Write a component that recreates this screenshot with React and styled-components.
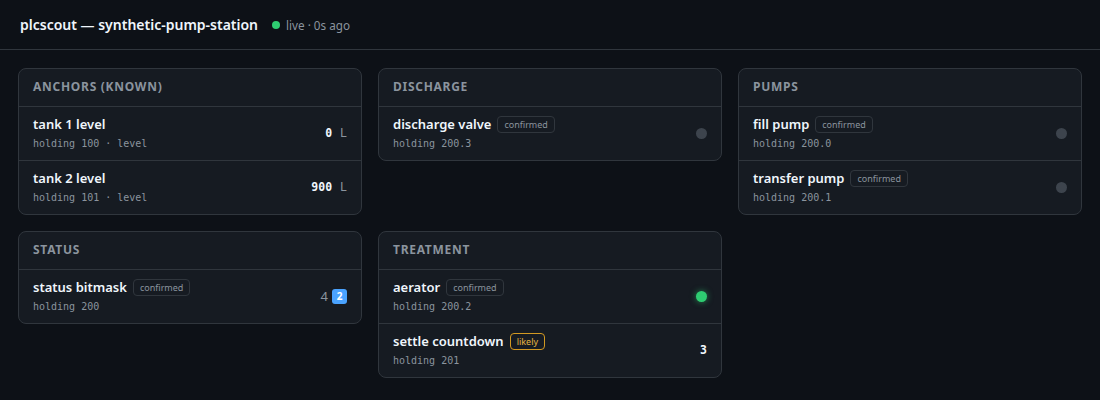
import React from "react";
import styled, { createGlobalStyle, css } from "styled-components";

const Global = createGlobalStyle`
  html, body { margin: 0; padding: 0; background: #0d1117; }
  body {
    font-family: "Segoe UI", "Noto Sans", "Open Sans", sans-serif;
    color: #e6edf3;
  }
  * { box-sizing: border-box; }
`;

const Page = styled.div`
  min-height: 400px;
  background: #0d1117;
`;

const Header = styled.header`
  height: 50px;
  display: flex;
  align-items: center;
  gap: 14px;
  padding: 0 20px;
  border-bottom: 1px solid #30363d;
`;

const Title = styled.h1`
  margin: 0;
  font-size: 14px;
  font-weight: 600;
  color: #f0f6fc;
`;

const Live = styled.span`
  display: flex;
  align-items: center;
  gap: 6px;
  font-size: 11.7px;
  color: #8b949e;
`;

const LiveDot = styled.span`
  width: 8px;
  height: 8px;
  border-radius: 50%;
  background: #2ecc71;
`;

const Grid = styled.main`
  display: grid;
  grid-template-columns: repeat(3, 1fr);
  gap: 16px;
  padding: 18px;
  align-items: start;
`;

const Card = styled.section`
  background: #161b22;
  border: 1px solid #30363d;
  border-radius: 8px;
  overflow: hidden;
`;

const CardHead = styled.h2`
  margin: 0;
  padding: 10px 14px 11px;
  font-size: 12px;
  font-weight: 700;
  letter-spacing: 0.06em;
  text-transform: uppercase;
  color: #8b949e;
  border-bottom: 1px solid #30363d;
  line-height: 16px;
`;

const Row = styled.div`
  display: flex;
  align-items: center;
  justify-content: space-between;
  padding: 8px 14px 9px;
  & + & { border-top: 1px solid #30363d; }
`;

const Info = styled.div`
  display: flex;
  flex-direction: column;
  gap: 4px;
`;

const NameLine = styled.div`
  display: flex;
  align-items: center;
  gap: 6px;
  height: 18px;
`;

const Name = styled.span`
  font-size: 13px;
  font-weight: 600;
  color: #f0f6fc;
  line-height: 18px;
`;

const Badge = styled.span`
  font-size: 9px;
  line-height: 13px;
  padding: 1px 6px;
  border-radius: 4px;
  border: 1px solid ${(p) => (p.$tone === "likely" ? "#d29922" : "#30363d")};
  color: ${(p) => (p.$tone === "likely" ? "#e3b341" : "#8b949e")};
`;

const Sub = styled.span`
  font-family: "DejaVu Sans Mono", "Liberation Mono", monospace;
  font-size: 10px;
  color: #8b949e;
  line-height: 14px;
`;

const Value = styled.span`
  display: flex;
  align-items: center;
  gap: 4px;
  font-family: "DejaVu Sans Mono", "Liberation Mono", monospace;
  font-size: 11.5px;
  font-weight: 700;
  color: #f0f6fc;
`;

const Unit = styled.span`
  font-weight: 400;
  color: #8b949e;
  margin-left: 4px;
`;

const Muted = styled.span`
  font-family: "Segoe UI", "Noto Sans", sans-serif;
  font-weight: 400;
  font-size: 13px;
  color: #8b949e;
`;

const Bit = styled.span`
  display: inline-flex;
  align-items: center;
  justify-content: center;
  width: 15px;
  height: 15px;
  border-radius: 3px;
  background: #4aa3ff;
  color: #fff;
  font-family: "Segoe UI", "Noto Sans", sans-serif;
  font-size: 10px;
  font-weight: 700;
`;

const Dot = styled.span`
  width: 11px;
  height: 11px;
  border-radius: 50%;
  background: #3d444d;
  ${(p) =>
    p.$on &&
    css`
      background: #2ecc71;
      box-shadow: 0 0 6px rgba(46, 204, 113, 0.6);
    `}
`;

function Item({ name, badge, sub, children }) {
  return (
    <Row>
      <Info>
        <NameLine>
          <Name>{name}</Name>
          {badge && <Badge $tone={badge}>{badge}</Badge>}
        </NameLine>
        <Sub>{sub}</Sub>
      </Info>
      {children}
    </Row>
  );
}

export default function App() {
  return (
    <Page>
      <Global />
      <Header>
        <Title>plcscout — synthetic-pump-station</Title>
        <Live>
          <LiveDot />
          live · 0s ago
        </Live>
      </Header>
      <Grid>
        <Card>
          <CardHead>Anchors (known)</CardHead>
          <Item name="tank 1 level" sub="holding 100 · level">
            <Value>
              0<Unit>L</Unit>
            </Value>
          </Item>
          <Item name="tank 2 level" sub="holding 101 · level">
            <Value>
              900<Unit>L</Unit>
            </Value>
          </Item>
        </Card>
        <Card>
          <CardHead>Discharge</CardHead>
          <Item name="discharge valve" badge="confirmed" sub="holding 200.3">
            <Dot />
          </Item>
        </Card>
        <Card>
          <CardHead>Pumps</CardHead>
          <Item name="fill pump" badge="confirmed" sub="holding 200.0">
            <Dot />
          </Item>
          <Item name="transfer pump" badge="confirmed" sub="holding 200.1">
            <Dot />
          </Item>
        </Card>
        <Card>
          <CardHead>Status</CardHead>
          <Item name="status bitmask" badge="confirmed" sub="holding 200">
            <Value>
              <Muted>4</Muted>
              <Bit>2</Bit>
            </Value>
          </Item>
        </Card>
        <Card>
          <CardHead>Treatment</CardHead>
          <Item name="aerator" badge="confirmed" sub="holding 200.2">
            <Dot $on />
          </Item>
          <Item name="settle countdown" badge="likely" sub="holding 201">
            <Value>3</Value>
          </Item>
        </Card>
      </Grid>
    </Page>
  );
}
